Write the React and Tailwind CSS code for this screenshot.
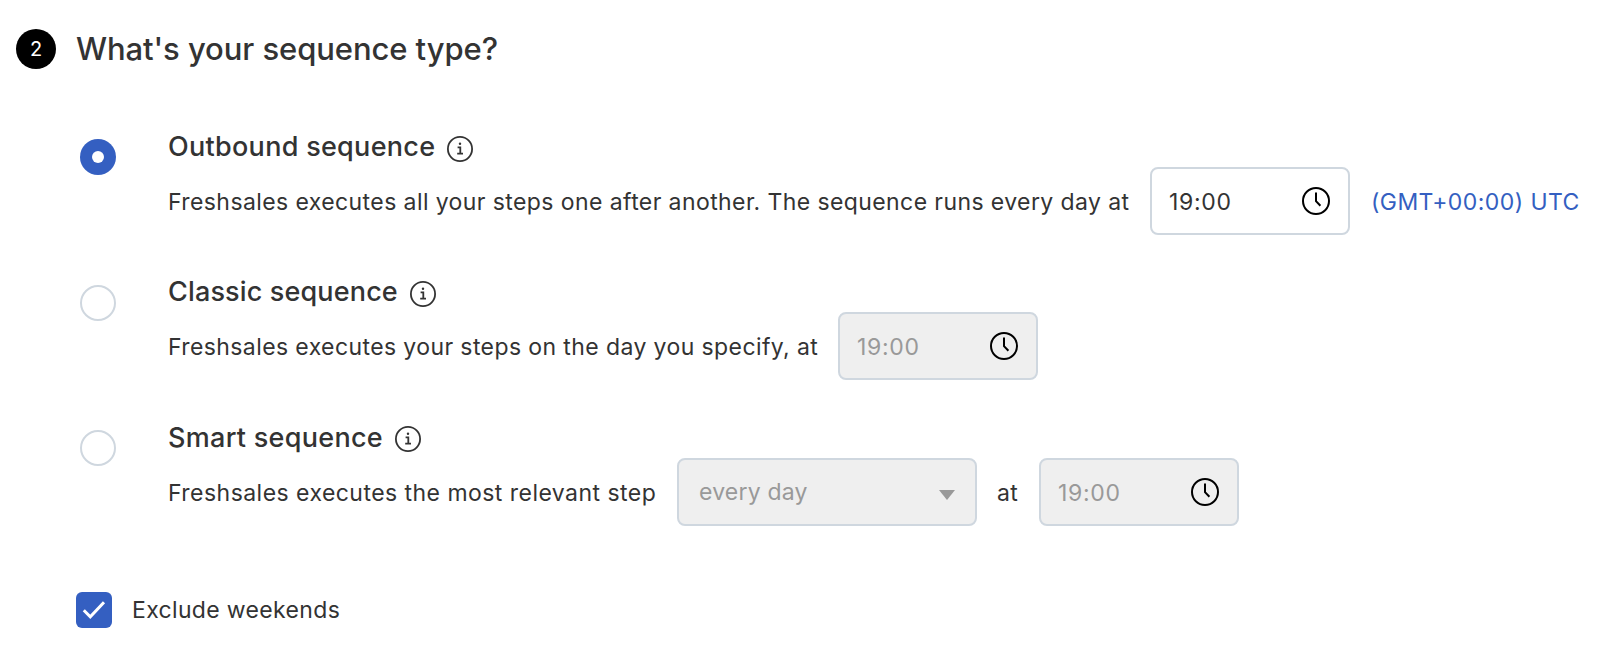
import { useState } from "react";
import clsx from "clsx";

const InfoIcon = () => (
  <svg className="h-[26px] w-[26px] shrink-0" fill="none" viewBox="0 0 26 26">
    <circle cx="13" cy="13" r="12.1" stroke="#333" strokeWidth="1.8" />
    <circle cx="13" cy="7.7" fill="#333" r="1.2" />
    <path d="M10.6 11.4h2.7v6.2M10.2 17.6h5.8" stroke="#333" strokeWidth="1.8" />
  </svg>
);

const ClockIcon = () => (
  <svg className="h-7 w-7 shrink-0" fill="none" viewBox="0 0 28 28">
    <circle cx="14" cy="14" r="13" stroke="#000" strokeWidth="2" />
    <path d="M14 5.5v8.7l4.4 4.6" stroke="#000" strokeWidth="2" />
  </svg>
);

const TimeInput = ({ value, disabled }) => (
  <div
    className={clsx(
      "flex h-[68px] w-[200px] shrink-0 items-center justify-between rounded-lg border-2 border-[#cfd7df] pr-[18px] pl-[17px] tracking-[0.7px]",
      disabled ? "bg-[#efefef] text-[#999]" : "bg-white text-[#333]"
    )}
  >
    <span className="pt-0.5">{value}</span>
    <ClockIcon />
  </div>
);

const FrequencySelect = () => (
  <div className="flex h-[68px] w-[300px] shrink-0 items-center justify-between rounded-lg border-2 border-[#cfd7df] bg-[#efefef] pr-5 pl-5 text-[#999]">
    <span className="tracking-[0.2px]">every day</span>
    <svg className="mt-1.5 h-[10px] w-4" viewBox="0 0 16 10">
      <path d="M0 0h16L8 10z" fill="#999" />
    </svg>
  </div>
);

const SequenceOption = ({
  title,
  titleClassName = "tracking-[0.29px]",
  checked,
  onSelect,
  children,
}) => (
  <div className="flex h-[145.4px] items-start">
    <button
      aria-checked={checked}
      aria-label={title}
      className={clsx(
        "mt-[9.4px] ml-1 flex h-9 w-9 shrink-0 items-center justify-center rounded-full",
        checked ? "bg-[#345fc1]" : "border-2 border-[#cfd7df] bg-white"
      )}
      role="radio"
      type="button"
      onClick={onSelect}
    >
      {checked && <span className="h-3 w-3 rounded-full bg-white" />}
    </button>
    <div className="ml-[52px]">
      <div className="flex h-[37px] items-start gap-3">
        <h2
          className={clsx(
            "pt-px text-[27px] leading-8 font-medium",
            titleClassName
          )}
        >
          {title}
        </h2>
        <span className="pt-[5.7px]">
          <InfoIcon />
        </span>
      </div>
      <div className="flex h-[68px] items-center whitespace-nowrap">
        {children}
      </div>
    </div>
  </div>
);

const App = () => {
  const [type, setType] = useState("outbound");
  const [excludeWeekends, setExcludeWeekends] = useState(true);

  return (
    <div className="h-[655px] w-[1609px] overflow-hidden bg-white pt-[29px] pl-4 font-['Inter',sans-serif] text-[23px] leading-8 text-[#333]">
      <div className="flex h-10 items-center">
        <span className="flex h-10 w-10 items-center justify-center rounded-full bg-black text-xl text-white">
          2
        </span>
        <h1 className="ml-5 text-[31px] leading-10 font-medium tracking-[-0.08px]">
          What&apos;s your sequence type?
        </h1>
      </div>
      <div className="mt-[61px] ml-[60px]" role="radiogroup">
        <SequenceOption
          checked={type === "outbound"}
          title="Outbound sequence"
          onSelect={() => setType("outbound")}
        >
          <span className="w-[982px] pt-0.5 tracking-[0.41px]">
            Freshsales executes all your steps one after another. The sequence
            runs every day at
          </span>
          <TimeInput disabled={type !== "outbound"} value="19:00" />
          <a
            className="ml-[21px] pt-0.5 tracking-[0.43px] text-[#345fc1]"
            href="#timezone"
          >
            (GMT+00:00) UTC
          </a>
        </SequenceOption>
        <SequenceOption
          checked={type === "classic"}
          title="Classic sequence"
          titleClassName="tracking-[0.15px]"
          onSelect={() => setType("classic")}
        >
          <span className="w-[670px] pt-0.5 tracking-[0.4px]">
            Freshsales executes your steps on the day you specify, at
          </span>
          <TimeInput disabled={type !== "classic"} value="19:00" />
        </SequenceOption>
        <SequenceOption
          checked={type === "smart"}
          title="Smart sequence"
          onSelect={() => setType("smart")}
        >
          <span className="w-[509px] pt-0.5 tracking-[0.46px]">
            Freshsales executes the most relevant step
          </span>
          <FrequencySelect />
          <span className="w-[62px] pt-0.5 pl-5 tracking-[0.4px]">at</span>
          <TimeInput disabled={type !== "smart"} value="19:00" />
        </SequenceOption>
      </div>
      <label className="mt-[25.8px] ml-[60px] flex h-9 items-center">
        <button
          aria-checked={excludeWeekends}
          className="flex h-9 w-9 items-center justify-center rounded-md bg-[#345fc1]"
          role="checkbox"
          type="button"
          onClick={() => setExcludeWeekends(!excludeWeekends)}
        >
          {excludeWeekends && (
            <svg className="h-9 w-9" fill="none" viewBox="0 0 36 36">
              <path d="M7.8 18.2l6.5 6.6L28 10.3" stroke="#fff" strokeWidth="3" />
            </svg>
          )}
        </button>
        <span className="ml-5 tracking-[0.34px]">Exclude weekends</span>
      </label>
    </div>
  );
};

export default App;
